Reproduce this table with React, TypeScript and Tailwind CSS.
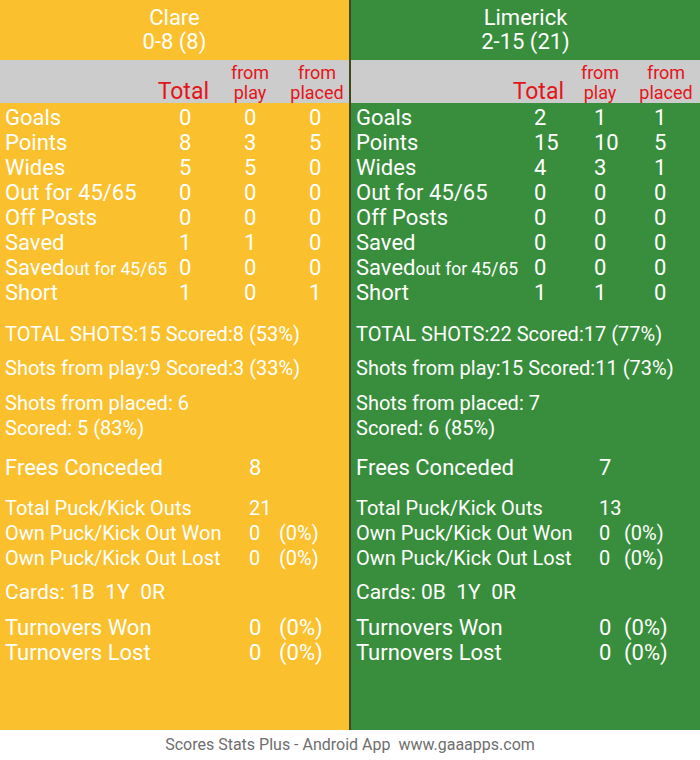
import React from "react";

type Team = {
    name: string;
    score: string;
    bg: string;
    rowGrid: string;
    headGrid: string;
    pairGrid: string;
    rows: [string, number, number, number][];
    totalShots: string;
    fromPlay: string;
    placed: string;
    placedScored: string;
    frees: number;
    kickOuts: number;
    cards: string;
};

const clare: Team = {
    name: "Clare",
    score: "0-8 (8)",
    bg: "bg-[#fbc02d]",
    rowGrid: "grid-cols-[179px_65px_65px_1fr]",
    headGrid: "grid-cols-[209px_82px_52px_1fr]",
    pairGrid: "grid-cols-[249px_30px_1fr]",
    rows: [
        ["Goals", 0, 0, 0],
        ["Points", 8, 3, 5],
        ["Wides", 5, 5, 0],
        ["Out for 45/65", 0, 0, 0],
        ["Off Posts", 0, 0, 0],
        ["Saved", 1, 1, 0],
        ["SAVED45", 0, 0, 0],
        ["Short", 1, 0, 1],
    ],
    totalShots: "TOTAL SHOTS:15 Scored:8 (53%)",
    fromPlay: "Shots from play:9 Scored:3 (33%)",
    placed: "Shots from placed: 6",
    placedScored: "Scored: 5 (83%)",
    frees: 8,
    kickOuts: 21,
    cards: "Cards: 1B  1Y  0R",
};

const limerick: Team = {
    name: "Limerick",
    score: "2-15 (21)",
    bg: "bg-[#388e3c]",
    rowGrid: "grid-cols-[183px_60px_60px_1fr]",
    headGrid: "grid-cols-[213px_72px_60px_1fr]",
    pairGrid: "grid-cols-[248px_25px_1fr]",
    rows: [
        ["Goals", 2, 1, 1],
        ["Points", 15, 10, 5],
        ["Wides", 4, 3, 1],
        ["Out for 45/65", 0, 0, 0],
        ["Off Posts", 0, 0, 0],
        ["Saved", 0, 0, 0],
        ["SAVED45", 0, 0, 0],
        ["Short", 1, 1, 0],
    ],
    totalShots: "TOTAL SHOTS:22 Scored:17 (77%)",
    fromPlay: "Shots from play:15 Scored:11 (73%)",
    placed: "Shots from placed: 7",
    placedScored: "Scored: 6 (85%)",
    frees: 7,
    kickOuts: 13,
    cards: "Cards: 0B  1Y  0R",
};

function Label({ text }: { text: string }) {
    if (text === "SAVED45") {
        return (
            <span>
                Saved<span className="text-[17.5px]">out for 45/65</span>
            </span>
        );
    }
    return <span>{text}</span>;
}

function PairRow({ label, value, pct, team, size }: { label: string; value: string; pct?: string; team: Team; size: string }) {
    return (
        <div className={`grid ${team.pairGrid} h-[25px] leading-[25px] ${size}`}>
            <div className="pl-[5px] whitespace-nowrap">{label}</div>
            <div className="whitespace-nowrap">{value}</div>
            <div className="whitespace-nowrap">{pct}</div>
        </div>
    );
}

function Panel({ team }: { team: Team }) {
    return (
        <div className={`flex-1 flex flex-col text-white ${team.bg}`}>
            <div className="h-[60px] pt-[6px] text-center text-[22px] leading-[24px]">
                <div>{team.name}</div>
                <div>{team.score}</div>
            </div>

            {/* column headings */}
            <div className={`grid ${team.headGrid} h-[43px] bg-[#cccccc] text-[#e3151b] items-end`}>
                <div className="text-right text-[23px] leading-[23px]">Total</div>
                <div className="flex flex-col items-center text-[18px] leading-[20px]">
                    <span>from</span>
                    <span>play</span>
                </div>
                <div className="flex flex-col items-center text-[18px] leading-[20px]">
                    <span>from</span>
                    <span>placed</span>
                </div>
                <div />
            </div>

            <div className="flex flex-col pt-[2px] text-[22px]">
                {team.rows.map(([label, t, p, pl]) => (
                    <div key={label} className={`grid ${team.rowGrid} h-[25px] leading-[25px]`}>
                        <div className="pl-[5px] whitespace-nowrap">
                            <Label text={label} />
                        </div>
                        <div>{t}</div>
                        <div>{p}</div>
                        <div>{pl}</div>
                    </div>
                ))}
            </div>

            <div className="pl-[5px] mt-[17px] text-[20px] leading-[25px] whitespace-nowrap">{team.totalShots}</div>
            <div className="pl-[5px] mt-[9px] text-[20px] leading-[25px] whitespace-nowrap">{team.fromPlay}</div>
            <div className="pl-[5px] mt-[10px] text-[20px] leading-[25px]">
                <div>{team.placed}</div>
                <div>{team.placedScored}</div>
            </div>

            <div className="mt-[14px]">
                <PairRow label="Frees Conceded" value={String(team.frees)} team={team} size="text-[22px]" />
            </div>

            <div className="mt-[16px]">
                <PairRow label="Total Puck/Kick Outs" value={String(team.kickOuts)} team={team} size="text-[20px]" />
                <PairRow label="Own Puck/Kick Out Won" value="0" pct="(0%)" team={team} size="text-[20px]" />
                <PairRow label="Own Puck/Kick Out Lost" value="0" pct="(0%)" team={team} size="text-[20px]" />
            </div>

            <div className="pl-[5px] mt-[9px] text-[21px] leading-[25px] whitespace-pre">{team.cards}</div>

            <div className="mt-[10px]">
                <PairRow label="Turnovers Won" value="0" pct="(0%)" team={team} size="text-[22px]" />
                <PairRow label="Turnovers Lost" value="0" pct="(0%)" team={team} size="text-[22px]" />
            </div>
        </div>
    );
}

export default function App() {
    return (
        <div className="w-[700px] h-[760px] flex flex-col bg-white font-['Roboto',sans-serif]">
            <div className="flex h-[730px]">
                <Panel team={clare} />
                <div className="w-[2px] bg-[#3f4a18]" />
                <Panel team={limerick} />
            </div>
            <div className="flex-1 flex items-center justify-center text-[16px] text-[#6e6e6e] whitespace-pre">
                Scores Stats Plus - Android App  www.gaaapps.com
            </div>
        </div>
    );
}
